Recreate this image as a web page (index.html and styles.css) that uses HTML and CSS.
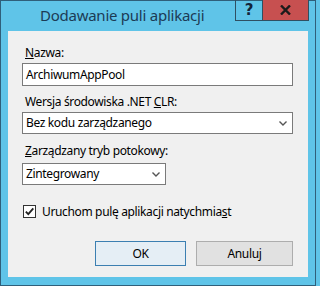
FILE: index.html
```html
<!DOCTYPE html>
<html lang="pl">
<head>
<meta charset="utf-8">
<link rel="stylesheet" href="styles.css">
</head>
<body>
<div class="window">
  <div class="titlebar">
    <div class="title">Dodawanie puli aplikacji</div>
    <div class="caption-buttons">
      <div class="cap-btn help">?</div>
      <div class="cap-btn close">
        <svg width="11" height="10" viewBox="0 0 11 10"><path d="M1 0.5 L10 9.5 M10 0.5 L1 9.5" stroke="#1b1b1b" stroke-width="2.4" fill="none"/></svg>
      </div>
    </div>
  </div>
  <div class="content">
    <div class="label l1"><u>N</u>azwa:</div>
    <div class="textbox">ArchiwumAppPool</div>
    <div class="label l2">Wersja środowiska .NET <u>C</u>LR:</div>
    <div class="combo wide">
      <span>Bez kodu zarządzanego</span>
      <svg class="chev" width="8" height="5" viewBox="0 0 8 5"><path d="M0.5 0.5 L4 4 L7.5 0.5" stroke="#555" stroke-width="1.4" fill="none"/></svg>
    </div>
    <div class="label l3"><u>Z</u>arządzany tryb potokowy:</div>
    <div class="combo narrow">
      <span>Zintegrowany</span>
      <svg class="chev" width="8" height="5" viewBox="0 0 8 5"><path d="M0.5 0.5 L4 4 L7.5 0.5" stroke="#555" stroke-width="1.4" fill="none"/></svg>
    </div>
    <div class="check-row">
      <div class="checkbox">
        <svg width="11" height="11" viewBox="0 0 11 11"><path d="M1.8 5.6 L4.3 8.2 L9.3 2.4" stroke="#222" stroke-width="1.8" fill="none"/></svg>
      </div>
      <div class="check-label">Uruchom pulę aplikacji natychmia<u>s</u>t</div>
    </div>
    <div class="buttons">
      <div class="btn ok">OK</div>
      <div class="btn cancel">Anuluj</div>
    </div>
  </div>
</div>
</body>
</html>
```

FILE: styles.css
```css
html, body {
  margin: 0;
  padding: 0;
  background: #5fc4e8;
}
body {
  width: 316px;
  height: 286px;
  overflow: hidden;
  font-family: "Noto Sans", "Open Sans", sans-serif;
  font-size: 12px;
  letter-spacing: -0.35px;
  color: #000;
}
.window {
  box-sizing: border-box;
  width: 316px;
  height: 286px;
  border: 1px solid #2f5f7a;
  background: #5fc4e8;
  display: flex;
  flex-direction: column;
}
.titlebar {
  height: 30px;
  display: flex;
  align-items: flex-start;
}
.title {
  padding-left: 39px;
  padding-top: 4px;
  font-size: 15px;
  letter-spacing: -0.25px;
  line-height: 20px;
  color: #1c3b55;
  white-space: nowrap;
}
.caption-buttons {
  margin-left: auto;
  margin-right: 6px;
  margin-top: -1px;
  display: flex;
  height: 21px;
  border: 1px solid #2f4f62;
  border-top: none;
  box-sizing: border-box;
}
.cap-btn {
  height: 20px;
  display: flex;
  align-items: center;
  justify-content: center;
}
.help {
  width: 27px;
  border-right: 1px solid #2f4f62;
  font-family: "DejaVu Sans", sans-serif;
  font-weight: bold;
  font-size: 15px;
  letter-spacing: 0;
  color: #13243a;
  padding-bottom: 1px;
  box-sizing: border-box;
}
.close {
  width: 45px;
  background: #c75050;
}
.content {
  margin: 0 7px 8px 7px;
  height: 246px;
  background: #f0f0f0;
  padding: 14px 15px 0 14px;
  box-sizing: border-box;
}
.label {
  line-height: 15px;
  padding-left: 3px;
  white-space: nowrap;
}
.l2 { margin-top: 8px; }
.l3 { margin-top: 9px; }
.textbox {
  margin-top: 3px;
  box-sizing: border-box;
  height: 23px;
  border: 1px solid #7a7a7a;
  background: #fff;
  padding-left: 3px;
  line-height: 21px;
}
.combo {
  margin-top: 3px;
  box-sizing: border-box;
  height: 22px;
  border: 1px solid #7a7a7a;
  background: #fff;
  padding: 0 5px 0 3px;
  line-height: 20px;
  display: flex;
  align-items: center;
}
.l3 + .combo { margin-top: 5px; }
.combo .chev { margin-left: auto; }
.narrow { width: 144px; }
.check-row {
  margin-top: 19px;
  display: flex;
  align-items: center;
  padding-left: 1px;
}
.checkbox {
  box-sizing: border-box;
  width: 13px;
  height: 13px;
  border: 1px solid #333;
  background: #fff;
  display: flex;
  align-items: center;
  justify-content: center;
}
.check-label {
  margin-left: 6px;
  line-height: 15px;
  white-space: nowrap;
}
.buttons {
  margin-top: 22px;
  display: flex;
  justify-content: flex-end;
  gap: 10px;
}
.btn {
  box-sizing: border-box;
  height: 25px;
  line-height: 23px;
  text-align: center;
  border: 1px solid #adadad;
  background: #e1e1e1;
}
.ok {
  width: 91px;
  border-color: #3c7fb1;
  background: #e5eef5;
}
.cancel {
  width: 97px;
}
```
